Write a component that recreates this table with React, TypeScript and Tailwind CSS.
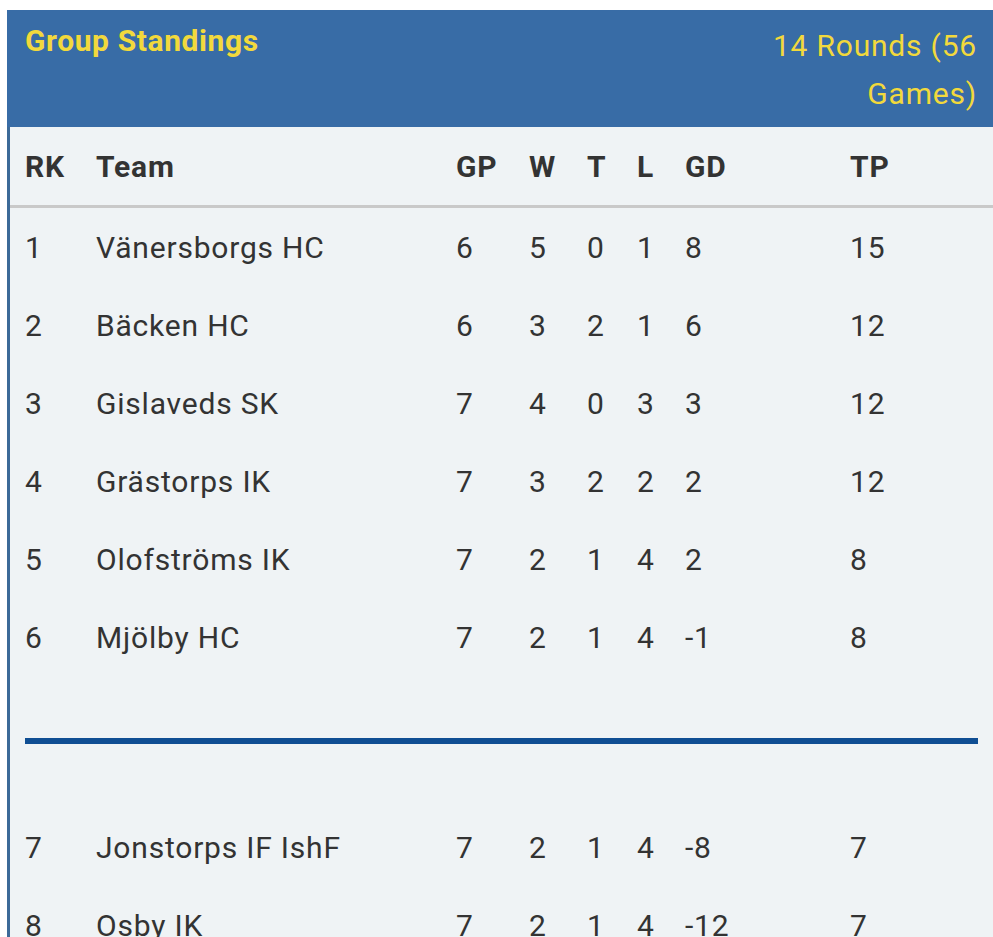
const rows = [
  { rk: 1, team: "Vänersborgs HC", gp: 6, w: 5, t: 0, l: 1, gd: "8", tp: 15 },
  { rk: 2, team: "Bäcken HC", gp: 6, w: 3, t: 2, l: 1, gd: "6", tp: 12 },
  { rk: 3, team: "Gislaveds SK", gp: 7, w: 4, t: 0, l: 3, gd: "3", tp: 12 },
  { rk: 4, team: "Grästorps IK", gp: 7, w: 3, t: 2, l: 2, gd: "2", tp: 12 },
  { rk: 5, team: "Olofströms IK", gp: 7, w: 2, t: 1, l: 4, gd: "2", tp: 8 },
  { rk: 6, team: "Mjölby HC", gp: 7, w: 2, t: 1, l: 4, gd: "-1", tp: 8 },
];

const lower = [
  { rk: 7, team: "Jonstorps IF IshF", gp: 7, w: 2, t: 1, l: 4, gd: "-8", tp: 7 },
  { rk: 8, team: "Osby IK", gp: 7, w: 2, t: 1, l: 4, gd: "-12", tp: 7 },
];

const cols = "grid grid-cols-[71px_360px_73px_58px_50px_48px_165px_1fr] items-center";

function Row({ r }: { r: (typeof rows)[number] }) {
  return (
    <div className={`${cols} h-[78px] text-[30px] text-[#333]`}>
      <div>{r.rk}</div>
      <div className="whitespace-nowrap">{r.team}</div>
      <div>{r.gp}</div>
      <div>{r.w}</div>
      <div>{r.t}</div>
      <div>{r.l}</div>
      <div>{r.gd}</div>
      <div>{r.tp}</div>
    </div>
  );
}

export default function App() {
  return (
    <div className="min-h-screen bg-white pt-[10px] font-['Roboto',sans-serif] tracking-[0.05em]">
      <div className="ml-[7px]">
        {/* Header */}
        <div className="flex items-start justify-between bg-[#386ca6] pl-[18px] pr-[16px] pt-[12px] pb-[9px]">
          <h2 className="text-[30px] font-bold leading-[38px] tracking-[0.02em] text-[#f2d93c]">Group Standings</h2>
          <div className="w-[230px] text-right text-[30px] leading-[48px] text-[#f2d93c]">
            14 Rounds (56 Games)
          </div>
        </div>

        {/* Table */}
        <div className="border-l-[3px] border-[#3c6a98] bg-[#eff3f5]">
          <div className={`${cols} h-[78px] pl-[15px] text-[30px] font-bold text-[#333]`}>
            <div>RK</div>
            <div>Team</div>
            <div>GP</div>
            <div>W</div>
            <div>T</div>
            <div>L</div>
            <div>GD</div>
            <div>TP</div>
          </div>
          <div className="h-[3px] bg-[#c9c9c9]" />
          <div className="pl-[15px]">
            {rows.map((r) => (
              <Row key={r.rk} r={r} />
            ))}
          </div>
          <div className="pl-[15px] pr-[15px] pt-[62px] pb-[64px]">
            <div className="h-[6px] bg-[#0f4e93]" />
          </div>
          <div className="pl-[15px]">
            {lower.map((r) => (
              <Row key={r.rk} r={r} />
            ))}
          </div>
        </div>
      </div>
    </div>
  );
}
